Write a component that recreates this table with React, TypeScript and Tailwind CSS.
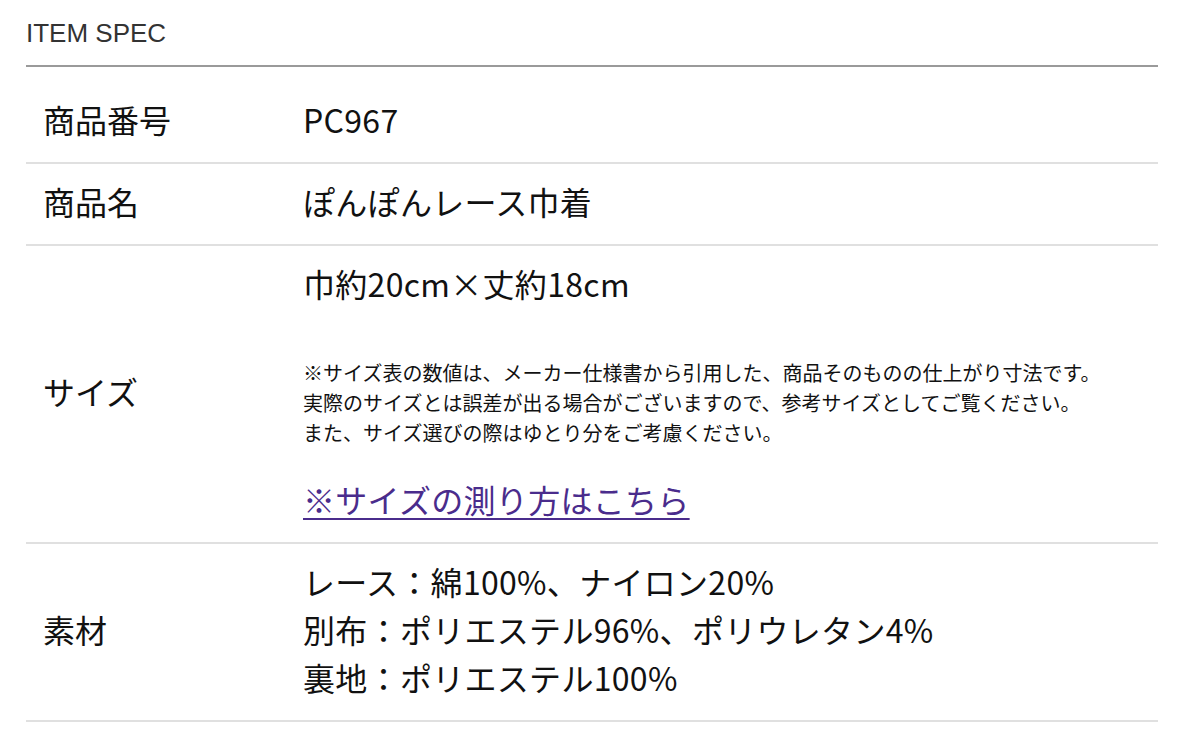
import React from "react";

const jp = { fontFamily: '"Noto Sans CJK JP", "Noto Sans", sans-serif' };

function Row({ label, children }: { label: string; children: React.ReactNode }) {
  return (
    <div className="grid grid-cols-[277px_1fr] border-b-2 border-[#e0e0e0]">
      <div className="flex items-center pl-[17px] pb-[6px] text-[32px] leading-[48px] text-[#111]">{label}</div>
      <div className="pt-[13px] pb-[19px] text-[32px] leading-[48px] text-[#111] tracking-[0.3px]">{children}</div>
    </div>
  );
}

export default function App() {
  return (
    <div className="w-[1192px] h-[736px] bg-white overflow-hidden" style={jp}>
      <div className="ml-[26px] w-[1132px] pt-[16px]">
        <div
          className="text-[26px] leading-[34px] text-[#333] pb-[15px] border-b-2 border-[#9a9a9a]"
          style={{ fontFamily: '"Liberation Sans", Arial, sans-serif' }}
        >
          ITEM SPEC
        </div>
        <div className="mt-[15px]">
          <Row label="商品番号">PC967</Row>
          <Row label="商品名">ぽんぽんレース巾着</Row>
          <Row label="サイズ">
            <div>巾約20cm×丈約18cm</div>
            <div className="mt-[51px] text-[20px] leading-[30px] tracking-normal">
              ※サイズ表の数値は、メーカー仕様書から引用した、商品そのものの仕上がり寸法です。
              <br />
              実際のサイズとは誤差が出る場合がございますので、参考サイズとしてご覧ください。
              <br />
              また、サイズ選びの際はゆとり分をご考慮ください。
            </div>
            <div className="mt-[27px]">
              <a href="#" className="text-[#4a2c8c] underline decoration-2 underline-offset-[5px]">
                ※サイズの測り方はこちら
              </a>
            </div>
          </Row>
          <Row label="素材">
            <div>レース：綿100%、ナイロン20%</div>
            <div>別布：ポリエステル96%、ポリウレタン4%</div>
            <div>裏地：ポリエステル100%</div>
          </Row>
        </div>
      </div>
    </div>
  );
}
